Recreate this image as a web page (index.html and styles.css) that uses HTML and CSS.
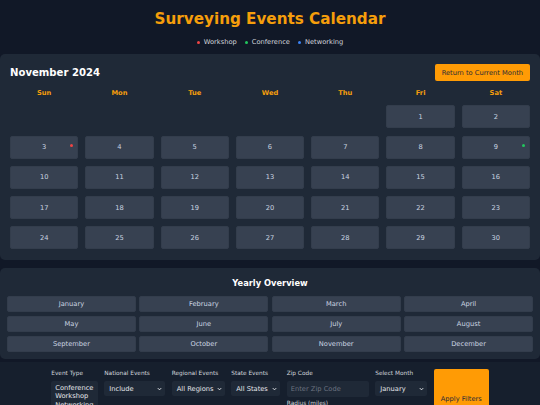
FILE: index.html
```html
<!DOCTYPE html>
<html lang="en">
<head>
<meta charset="utf-8">
<title>Surveying Events Calendar</title>
<link rel="stylesheet" href="styles.css">
</head>
<body>
<header class="header">
  <h1 class="title">Surveying Events Calendar</h1>
  <div class="legend">
    <span class="legend-item"><span class="dot dot-red"></span>Workshop</span>
    <span class="legend-item"><span class="dot dot-green"></span>Conference</span>
    <span class="legend-item"><span class="dot dot-blue"></span>Networking</span>
  </div>
</header>

<section class="panel calendar">
  <div class="cal-head">
    <h2 class="month-title">November 2024</h2>
    <button class="btn-return">Return to Current Month</button>
  </div>
  <div class="grid">
    <div class="dow">Sun</div><div class="dow">Mon</div><div class="dow">Tue</div><div class="dow">Wed</div><div class="dow">Thu</div><div class="dow">Fri</div><div class="dow">Sat</div>
    <div class="empty"></div><div class="empty"></div><div class="empty"></div><div class="empty"></div><div class="empty"></div>
    <div class="day">1</div><div class="day">2</div>
    <div class="day">3<span class="event-dot dot-red"></span></div><div class="day">4</div><div class="day">5</div><div class="day">6</div><div class="day">7</div><div class="day">8</div><div class="day">9<span class="event-dot dot-green"></span></div>
    <div class="day">10</div><div class="day">11</div><div class="day">12</div><div class="day">13</div><div class="day">14</div><div class="day">15</div><div class="day">16</div>
    <div class="day">17</div><div class="day">18</div><div class="day">19</div><div class="day">20</div><div class="day">21</div><div class="day">22</div><div class="day">23</div>
    <div class="day">24</div><div class="day">25</div><div class="day">26</div><div class="day">27</div><div class="day">28</div><div class="day">29</div><div class="day">30</div>
  </div>
</section>

<section class="panel yearly">
  <h3 class="yearly-title">Yearly Overview</h3>
  <div class="months">
    <div class="month">January</div><div class="month">February</div><div class="month">March</div><div class="month">April</div>
    <div class="month">May</div><div class="month">June</div><div class="month">July</div><div class="month">August</div>
    <div class="month">September</div><div class="month">October</div><div class="month">November</div><div class="month">December</div>
  </div>
</section>

<section class="filters">
  <div class="group">
    <label class="lbl">Event Type</label>
    <div class="listbox w-type">
      <div class="opt">Conference</div>
      <div class="opt">Workshop</div>
      <div class="opt">Networking</div>
      <div class="opt">Seminar</div>
    </div>
  </div>
  <div class="group">
    <label class="lbl">National Events</label>
    <div class="select w-nat"><span>Include</span><svg class="chev" viewBox="0 0 6 4"><path d="M1 1l2 2 2-2" /></svg></div>
  </div>
  <div class="group">
    <label class="lbl">Regional Events</label>
    <div class="select w-reg"><span>All Regions</span><svg class="chev" viewBox="0 0 6 4"><path d="M1 1l2 2 2-2" /></svg></div>
  </div>
  <div class="group">
    <label class="lbl">State Events</label>
    <div class="select w-state"><span>All States</span><svg class="chev" viewBox="0 0 6 4"><path d="M1 1l2 2 2-2" /></svg></div>
  </div>
  <div class="group">
    <label class="lbl">Zip Code</label>
    <input class="input w-zip" type="text" placeholder="Enter Zip Code">
    <label class="lbl lbl-sub">Radius (miles)</label>
    <div class="select select-tall w-zip"><span>25</span><svg class="chev" viewBox="0 0 6 4"><path d="M1 1l2 2 2-2" /></svg></div>
  </div>
  <div class="group">
    <label class="lbl">Select Month</label>
    <div class="select w-month"><span>January</span><svg class="chev" viewBox="0 0 6 4"><path d="M1 1l2 2 2-2" /></svg></div>
  </div>
  <button class="btn-apply">Apply Filters</button>
</section>
</body>
</html>
```
FILE: styles.css
```css
* { box-sizing: border-box; }
html { overflow: hidden; }
body {
  margin: 0;
  background: #111827;
  font-family: "DejaVu Sans", Verdana, sans-serif;
  font-size: 6.7px;
  color: #d1d5db;
}
.header { padding-top: 10px; text-align: center; }
.title {
  margin: 0;
  font-size: 15.2px;
  line-height: 18px;
  font-weight: bold;
  color: #f59e0b;
}
.legend {
  display: flex;
  justify-content: center;
  gap: 8px;
  margin: 10px 0 8px;
  line-height: 8px;
  height: 8px;
}
.legend-item { display: flex; align-items: center; gap: 4px; }
.dot { width: 3px; height: 3px; border-radius: 50%; display: inline-block; }
.dot-red { background: #ef4444; }
.dot-green { background: #22c55e; }
.dot-blue { background: #3b82f6; }

.panel { background: #1f2937; border-radius: 5px; }
.calendar { padding: 10px 10px 10.7px; }
.cal-head {
  display: flex;
  justify-content: space-between;
  align-items: center;
  height: 17px;
}
.month-title {
  margin: 0;
  font-size: 10.1px;
  font-weight: bold;
  color: #ffffff;
}
.btn-return {
  height: 17px;
  padding: 0 7px;
  border: 0;
  border-radius: 2px;
  background: #ff9b05;
  color: #1f2937;
  font-family: inherit;
  font-size: 6.7px;
}
.grid {
  display: grid;
  grid-template-columns: repeat(7, 1fr);
  column-gap: 7px;
  row-gap: 7.3px;
  margin-top: 7px;
}
.dow {
  height: 10px;
  line-height: 10px;
  text-align: center;
  font-weight: bold;
  color: #f59e0b;
}
.day {
  position: relative;
  height: 23px;
  display: flex;
  align-items: center;
  justify-content: center;
  background: #374151;
  border: 1px solid #333d4c;
  border-radius: 2px;
  color: #cbd5e1;
}
.event-dot {
  position: absolute;
  top: 7.5px;
  right: 4px;
  width: 3px;
  height: 3px;
  border-radius: 50%;
}

.yearly { margin-top: 8px; padding: 10px 7px 7px; }
.yearly-title {
  margin: 0 0 8px;
  text-align: center;
  font-size: 8.3px;
  line-height: 10px;
  font-weight: bold;
  color: #ffffff;
}
.months {
  display: grid;
  grid-template-columns: repeat(4, 1fr);
  column-gap: 3.5px;
  row-gap: 4px;
}
.month {
  height: 16px;
  display: flex;
  align-items: center;
  justify-content: center;
  background: #374151;
  border: 1px solid #333d4c;
  border-radius: 2px;
  color: #cbd5e1;
}

.filters {
  margin-top: 3px;
  padding: 7px;
  background: #161f2d;
  display: flex;
  justify-content: center;
  align-items: stretch;
  gap: 6.5px;
}
.group { display: flex; flex-direction: column; }
.lbl {
  display: block;
  font-size: 5.8px;
  line-height: 9px;
  margin-bottom: 2.7px;
  color: #d1d5db;
}
.lbl-sub { margin-top: 2.3px; }
.listbox {
  background: #1f2937;
  border-radius: 2px;
  padding: 3px 4px;
  color: #e5e7eb;
}
.opt { line-height: 8.5px; white-space: nowrap; }
.select {
  height: 15.5px;
  display: flex;
  align-items: center;
  justify-content: space-between;
  padding: 0 3px 0 5px;
  background: #1f2937;
  border-radius: 2px;
  color: #e5e7eb;
}
.select-tall { height: 18px; }
.chev { width: 5px; height: 4px; fill: none; stroke: #e5e7eb; stroke-width: 1.2; }
.input {
  height: 16px;
  padding: 0 4px;
  background: #1f2937;
  border: 0;
  border-radius: 2px;
  font-family: inherit;
  font-size: 6.7px;
  color: #e5e7eb;
  outline: none;
}
.input::placeholder { color: #6b7280; }
.w-type { width: 46.5px; }
.w-nat { width: 61px; }
.w-reg { width: 53px; }
.w-state { width: 49px; }
.w-zip { width: 82px; }
.w-month { width: 52px; }
.btn-apply {
  width: 55px;
  border: 0;
  border-radius: 2px;
  background: #ff9b05;
  color: #1f2937;
  font-family: inherit;
  font-size: 6.7px;
  padding: 0;
}
```
